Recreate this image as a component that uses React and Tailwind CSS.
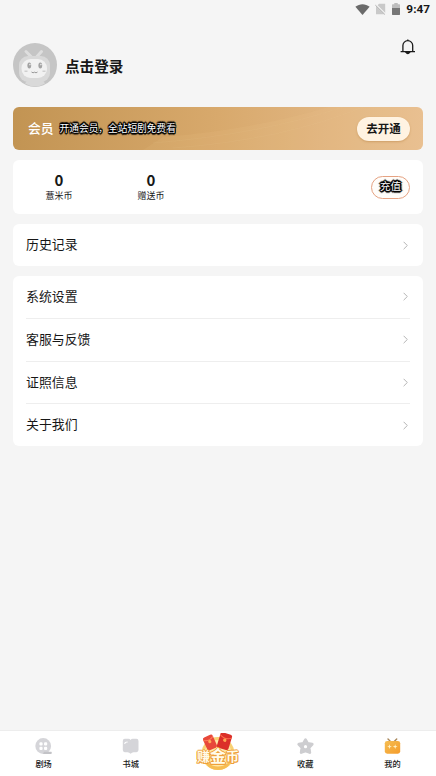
// Profile page
const menuItems = ['系统设置', '客服与反馈', '证照信息', '关于我们'];

const Chevron = () => (
  <svg className="w-[5px] h-[9px] mr-[2px]" viewBox="0 0 5 9" fill="none" stroke="#b5b5b5" strokeWidth="1">
    <path d="M.6.8 4.3 4.5.6 8.2" />
  </svg>
);

const StatusBar = () => (
  <div className="flex h-[18px] items-center justify-end pr-[6px] text-[#6a6a6a]">
    <svg className="w-[15px] h-[11px]" viewBox="0 0 15 11" fill="currentColor">
      <path d="M.4 2.7C4.6-.7 10.4-.7 14.6 2.7L7.5 11Z" />
    </svg>
    <svg className="ml-[5px] w-[11px] h-[12px]" viewBox="0 0 11 12">
      <path d="M4 .7h6.2v10.6H1V4Z" fill="#c9c9c9" />
      <path d="M.6 1.6 10.6 11.4" stroke="#f5f5f5" strokeWidth="2" />
      <path d="M.4 2.2 9.8 11.4" stroke="#aaa" strokeWidth="1" />
    </svg>
    <svg className="ml-[6px] w-[8px] h-[12px]" viewBox="0 0 8 12">
      <path d="M2.3 0h3.4v1.2H7.4q.6 0 .6.6V6H0V1.8q0-.6.6-.6h1.7Z" fill="#bdbdbd" />
      <path d="M0 5h8v6.2q0 .8-.6.8H.6Q0 12 0 11.2Z" fill="#777" />
    </svg>
    <span className="ml-[6px] mt-px font-['Roboto'] text-[11.8px] font-bold leading-none text-[#171717]">9:47</span>
  </div>
);

const Avatar = () => (
  <svg className="w-11 h-11" viewBox="0 0 44 44">
    <circle cx="22" cy="22" r="22" fill="#c5c5c5" />
    <path d="M13 8.5 18 13.5M28.5 8.5 24 13.5" stroke="#dedede" strokeWidth="3" strokeLinecap="round" />
    <path d="M15 36h14l3 4.5q-10 6-20 0Z" fill="#d9d9d9" />
    <rect x="6" y="13" width="31" height="26" rx="9" fill="#d9d9d9" />
    <rect x="8.5" y="16" width="25.5" height="19" rx="9" fill="#f1f1f1" />
    <ellipse cx="16.3" cy="22.5" rx="1.9" ry="2.9" fill="#a3a3a3" />
    <ellipse cx="27.3" cy="22.5" rx="1.9" ry="2.9" fill="#a3a3a3" />
    <circle cx="16.9" cy="21.6" r=".8" fill="#eee" />
    <circle cx="27.9" cy="21.6" r=".8" fill="#eee" />
    <path d="M18.5 29q1.6 1.5 3 .2q1.6 1.3 3-.2" fill="none" stroke="#8f8f8f" strokeWidth=".9" />
    <path d="M11.5 28.3h3M29.5 28.3h3" stroke="#cfcfcf" strokeWidth="1.6" />
  </svg>
);

const Bell = () => (
  <svg className="w-4 h-4" viewBox="0 0 16 16" fill="none" stroke="#1b1b1b" strokeWidth="1.3">
    <path d="M2.9 12.4V6.6a4.9 4.9 0 0 1 9.8 0v5.8M.6 12.6h14.4" />
    <path d="M7.8.4v1.4" />
    <path d="M5.8 13.2q2 2.7 4 0Z" fill="#1b1b1b" />
  </svg>
);

const ReelIcon = () => (
  <svg className="w-[17px] h-[17px]" viewBox="0 0 17 17">
    <circle cx="8.2" cy="8" r="7.9" fill="#d5d5d9" />
    <path d="M9 13.8h7.2q.6 0 .6.9t-.6 1.2H8Z" fill="#c3c3c7" />
    <g fill="#fff">
      <rect x="4.4" y="4.3" width="3.2" height="3.2" rx="1.1" />
      <rect x="9" y="4.3" width="3.2" height="3.2" rx="1.1" />
      <rect x="4.4" y="8.8" width="3.2" height="3.2" rx="1.1" />
      <rect x="9" y="8.8" width="3.2" height="3.2" rx="1.1" />
    </g>
  </svg>
);

const BookIcon = () => (
  <svg className="w-[17px] h-[17px]" viewBox="0 0 17 17">
    <path d="M2.8.8h3.6q1.5 0 2.2 1.3.7-1.3 2.2-1.3h3.6q2.1 0 2.1 2.1v9.2q0 2-2.1 2.1h-2.9q-1.6 0-2.9 1.5-1.3-1.5-2.9-1.5H2.8Q.8 14.2.8 12.1V2.9Q.8.8 2.8.8Z" fill="#d5d5d9" />
    <path d="M2.8 5.3Q3 4 5.2 4" stroke="#fff" strokeWidth="1.2" strokeLinecap="round" fill="none" />
  </svg>
);

const StarIcon = () => (
  <svg className="w-[17px] h-[17px]" viewBox="0 0 17 17">
    <path d="m8.5 1.8 2 3.5 4.7.9-3.1 3.4.7 4.9-4.3-1.6-4.3 1.6.7-4.9-3.1-3.4 4.7-.9Z" fill="#cdcdd0" stroke="#cdcdd0" strokeWidth="2.8" strokeLinejoin="round" />
    <circle cx="8.5" cy="8.7" r="1.6" fill="#fff" />
  </svg>
);

const MineIcon = () => (
  <svg className="w-[17px] h-[17px]" viewBox="0 0 17 17">
    <defs>
      <linearGradient id="mine" x1="0" y1="0" x2="1" y2="1">
        <stop stopColor="#f5bd52" />
        <stop offset="1" stopColor="#f59c2b" />
      </linearGradient>
    </defs>
    <path d="M4 .9 6.5 3.4M12.7.9 10.2 3.4" stroke="#a8865a" strokeWidth="1.4" strokeLinecap="round" />
    <rect x=".8" y="2.9" width="15.4" height="12.8" rx="2.4" fill="url(#mine)" />
    <path d="m5.5 6.3.6 1.8 1.8.5-1.8.6-.6 1.8-.6-1.8-1.7-.6 1.7-.5ZM11.2 6.3l.6 1.8 1.7.5-1.7.6-.6 1.8-.6-1.8-1.8-.6 1.8-.5Z" fill="#fff1c5" />
  </svg>
);

const CoinBadge = () => (
  <div className="relative flex h-[38px] w-11 items-center justify-center">
    <svg className="absolute inset-0 w-11 h-[38px]" viewBox="0 0 44 38">
      <circle cx="22" cy="20.5" r="16.5" fill="#f9d174" />
      <circle cx="22" cy="20.5" r="13.5" fill="#ffe7a5" />
      <path d="M9 28q13 11 26 0-3 9-13 9T9 28Z" fill="#f7bd52" />
      <g transform="rotate(-24 14 9)">
        <rect x="8.5" y="2.5" width="10.5" height="14" rx="2" fill="#e8483a" />
        <path d="M8.5 5q5.2 3.5 10.5 0" stroke="#ff7b59" fill="none" />
        <circle cx="14" cy="8.5" r="1.6" fill="#ffad58" />
      </g>
      <g transform="rotate(17 28 8)">
        <rect x="22.5" y="0" width="12" height="16" rx="2" fill="#db3029" />
        <path d="M22.5 3q6 4 12 0" stroke="#ff6c4c" fill="none" />
        <circle cx="28.5" cy="7" r="1.7" fill="#ffa552" />
      </g>
    </svg>
    <span className="relative top-[3px] flex items-center whitespace-nowrap text-[13px] font-bold leading-none text-[#fffbe9] [text-shadow:1px_0_#efa039,-1px_0_#efa039,0_1px_#efa039,0_-1px_#efa039,1px_1px_#efa039,-1px_1px_#efa039]">
      赚<span className="text-[16px]">金</span>币
    </span>
  </div>
);

const MenuRow = ({ label }) => (
  <div className="flex flex-1 items-center justify-between">
    <span className="-mt-[2px]">{label}</span>
    <Chevron />
  </div>
);

const Tab = ({ icon, label }) => (
  <div className="flex flex-1 flex-col items-center pt-[7px]">
    {icon}
    <span className="mt-[3px] text-[8.2px] font-medium leading-[10px] text-[#181818]">{label}</span>
  </div>
);

const Balance = ({ label }) => (
  <div className="flex w-[92px] flex-col items-center">
    <span className="font-['Noto_Sans_CJK_SC'] text-[15px] font-bold leading-[16px]">0</span>
    <span className="mt-px text-[9px] leading-[13px]">{label}</span>
  </div>
);

export default function App() {
  return (
    <div className="flex h-[776px] w-[436px] flex-col overflow-hidden bg-[#f5f5f5] font-['Noto_Sans_CJK_SC','Roboto',sans-serif] text-[#171717]">
      <StatusBar />

      <header className="mt-[21px] flex h-[68px] items-start justify-between pl-[13px] pr-[20px]">
        <div className="mt-1 flex items-center">
          <Avatar />
          <span className="ml-2 mt-[2px] text-[14.6px] font-bold leading-none">点击登录</span>
        </div>
        <Bell />
      </header>

      <main className="flex flex-1 flex-col px-[13px]">
        {/* Membership banner */}
        <section className="relative flex h-[43px] items-center overflow-hidden rounded-[6px] bg-linear-to-r from-[#c29453] via-[#d8a96c] to-[#e8bf91] pl-[15px] pr-[13px]">
          <svg className="absolute inset-0 h-full w-full" viewBox="0 0 410 43" fill="none">
            <path d="M150 30Q245 22 315 0H410V43H130Z" fill="#f6cf98" fillOpacity=".1" />
            <path d="M140 36Q250 27 330 0M160 41Q270 33 350 0" stroke="#f7d4a3" strokeOpacity=".08" />
          </svg>
          <span className="relative text-[12.8px] font-medium leading-none text-white">会员</span>
          <span className="relative ml-[6px] text-[9.7px] leading-none text-white [text-shadow:1px_0_#000,-1px_0_#000,0_1px_#000,0_-1px_#000,1px_1px_#000,-1px_1px_#000,1px_-1px_#000,-1px_-1px_#000,0_2px_1px_#000,0_-2px_1px_#000]">开通会员，全站短剧免费看</span>
          <button className="relative ml-auto h-6 w-[53px] rounded-full bg-[#fff3e2] pt-px text-[11.5px] font-bold leading-none shadow-[0_1px_2px_#b9834480]">去开通</button>
        </section>

        <section className="mt-[10px] flex h-[54px] items-center rounded-[6px] bg-white pr-[13px]">
          <Balance label="薏米币" />
          <Balance label="赠送币" />
          <button className="ml-auto h-[23px] w-[39px] rounded-full border border-[#e5a282] bg-[#fffdfa] text-[10.5px] leading-none text-white">
            <span className="relative -top-px [text-shadow:1px_0_#000,-1px_0_#000,0_1px_#000,0_-1px_#000,1px_1px_#000,-1px_1px_#000,1px_-1px_#000,-1px_-1px_#000,0_2px_1px_#000,0_-2px_1px_#000,2px_0_1px_#000,-2px_0_1px_#000]">充值</span>
          </button>
        </section>

        <section className="mt-[10px] flex h-[42px] rounded-[6px] bg-white px-[13px] text-[12.9px]">
          <MenuRow label="历史记录" />
        </section>

        <section className="mt-[10px] flex h-[170px] flex-col divide-y divide-[#eeeeee] rounded-[6px] bg-white px-[13px] text-[12.9px]">
          {menuItems.map((item) => (
            <MenuRow key={item} label={item} />
          ))}
        </section>
      </main>

      <nav className="flex h-[46px] border-t border-[#ededed] bg-white">
        <Tab icon={<ReelIcon />} label="剧场" />
        <Tab icon={<BookIcon />} label="书城" />
        <div className="flex flex-1 justify-center pt-[2px]">
          <CoinBadge />
        </div>
        <Tab icon={<StarIcon />} label="收藏" />
        <Tab icon={<MineIcon />} label="我的" />
      </nav>
    </div>
  );
}
